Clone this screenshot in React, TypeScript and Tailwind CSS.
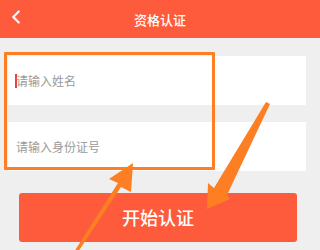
import { ChevronLeft } from "lucide-react";

const App = () => {
  return (
    <div
      className="relative w-[320px] h-[250px] overflow-hidden bg-[#efefef]"
      style={{ fontFamily: '"Noto Sans CJK SC", "Noto Sans", sans-serif' }}
    >
      {/* Header */}
      <div className="h-[38px] bg-[#fe5a3c] flex items-center relative">
        <ChevronLeft className="absolute left-[5px] top-[6px] w-[22px] h-[22px] text-white" strokeWidth={2.4} />
        <h1 className="flex-1 text-center text-white text-[13px] font-medium leading-none">资格认证</h1>
      </div>

      {/* Form */}
      <div className="pt-[18px] pl-[8px] pr-[14px] flex flex-col">
        <div className="h-[49px] bg-white flex items-center pl-[7px]">
          <span className="w-[2px] h-[14px] bg-[#e5443a] mr-[-1px]" />
          <span className="text-[12px] text-[#9a9a9a]">请输入姓名</span>
        </div>
        <div className="h-[49px] bg-white flex items-center pl-[8px] mt-[17px]">
          <span className="text-[12px] text-[#9a9a9a]">请输入身份证号</span>
        </div>
      </div>

      <div className="px-[19px] pr-[23px] mt-[22px]">
        <button className="w-full h-[49px] rounded-[3px] bg-[#fe5a3c] text-white text-[18px] font-medium">
          开始认证
        </button>
      </div>

      {/* Annotation box */}
      <div className="absolute left-[4px] top-[52px] w-[211px] h-[118px] border-[3px] border-[#fd7e23] rounded-[1px]" />

      {/* Annotation arrows */}
      <svg className="absolute inset-0" width="320" height="250" viewBox="0 0 320 250">
        <polygon points="74,252 78,252 121,187 131,192 133,163 109,179 118,183" fill="#fd7e23" />
        <polygon points="266,102 270,104 227,195 230,199 207,209 208,183 214,188" fill="#fd7e23" />
      </svg>
    </div>
  );
};

export default App;
